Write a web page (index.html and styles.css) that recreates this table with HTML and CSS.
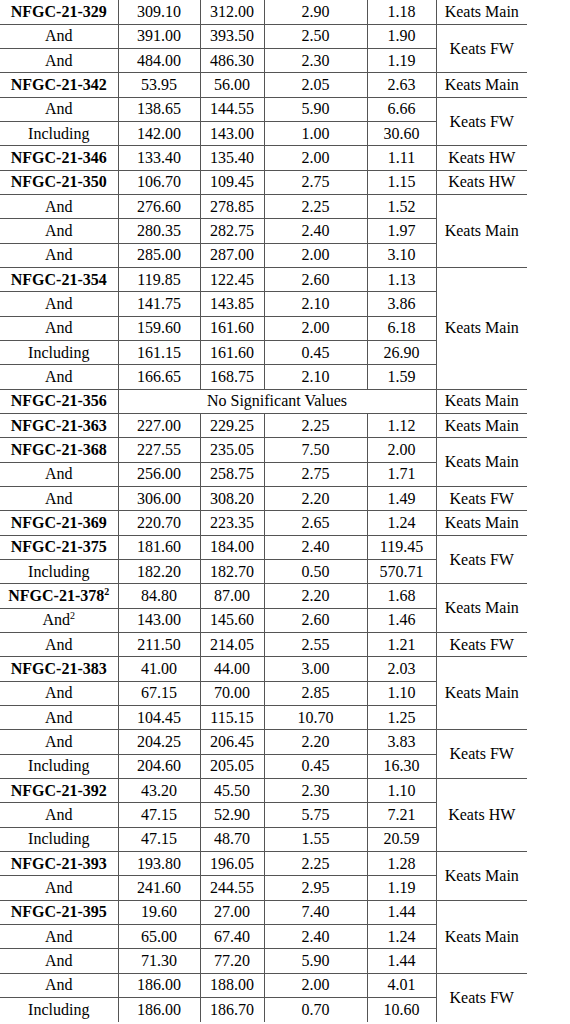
FILE: index.html
```html
<!DOCTYPE html>
<html lang="en">
<head>
<meta charset="UTF-8">
<meta name="viewport" content="width=device-width, initial-scale=1.0">
<title>Drill Results</title>
<link rel="stylesheet" href="styles.css">
</head>
<body>
<table class="assays">
    <colgroup>
        <col class="c-hole">
        <col class="c-from">
        <col class="c-to">
        <col class="c-len">
        <col class="c-au">
        <col class="c-zone">
    </colgroup>
    <tbody>
        <tr><td class="hole">NFGC-21-329</td><td>309.10</td><td>312.00</td><td>2.90</td><td>1.18</td><td class="zone">Keats Main</td></tr>
        <tr><td>And</td><td>391.00</td><td>393.50</td><td>2.50</td><td>1.90</td><td class="zone" rowspan="2">Keats FW</td></tr>
        <tr><td>And</td><td>484.00</td><td>486.30</td><td>2.30</td><td>1.19</td></tr>

        <tr><td class="hole">NFGC-21-342</td><td>53.95</td><td>56.00</td><td>2.05</td><td>2.63</td><td class="zone">Keats Main</td></tr>
        <tr><td>And</td><td>138.65</td><td>144.55</td><td>5.90</td><td>6.66</td><td class="zone" rowspan="2">Keats FW</td></tr>
        <tr><td>Including</td><td>142.00</td><td>143.00</td><td>1.00</td><td>30.60</td></tr>

        <tr><td class="hole">NFGC-21-346</td><td>133.40</td><td>135.40</td><td>2.00</td><td>1.11</td><td class="zone">Keats HW</td></tr>

        <tr><td class="hole">NFGC-21-350</td><td>106.70</td><td>109.45</td><td>2.75</td><td>1.15</td><td class="zone">Keats HW</td></tr>
        <tr><td>And</td><td>276.60</td><td>278.85</td><td>2.25</td><td>1.52</td><td class="zone" rowspan="3">Keats Main</td></tr>
        <tr><td>And</td><td>280.35</td><td>282.75</td><td>2.40</td><td>1.97</td></tr>
        <tr><td>And</td><td>285.00</td><td>287.00</td><td>2.00</td><td>3.10</td></tr>

        <tr><td class="hole">NFGC-21-354</td><td>119.85</td><td>122.45</td><td>2.60</td><td>1.13</td><td class="zone" rowspan="5">Keats Main</td></tr>
        <tr><td>And</td><td>141.75</td><td>143.85</td><td>2.10</td><td>3.86</td></tr>
        <tr><td>And</td><td>159.60</td><td>161.60</td><td>2.00</td><td>6.18</td></tr>
        <tr><td>Including</td><td>161.15</td><td>161.60</td><td>0.45</td><td>26.90</td></tr>
        <tr><td>And</td><td>166.65</td><td>168.75</td><td>2.10</td><td>1.59</td></tr>

        <tr><td class="hole">NFGC-21-356</td><td colspan="4">No Significant Values</td><td class="zone">Keats Main</td></tr>

        <tr><td class="hole">NFGC-21-363</td><td>227.00</td><td>229.25</td><td>2.25</td><td>1.12</td><td class="zone">Keats Main</td></tr>

        <tr><td class="hole">NFGC-21-368</td><td>227.55</td><td>235.05</td><td>7.50</td><td>2.00</td><td class="zone" rowspan="2">Keats Main</td></tr>
        <tr><td>And</td><td>256.00</td><td>258.75</td><td>2.75</td><td>1.71</td></tr>
        <tr><td>And</td><td>306.00</td><td>308.20</td><td>2.20</td><td>1.49</td><td class="zone">Keats FW</td></tr>

        <tr><td class="hole">NFGC-21-369</td><td>220.70</td><td>223.35</td><td>2.65</td><td>1.24</td><td class="zone">Keats Main</td></tr>

        <tr><td class="hole">NFGC-21-375</td><td>181.60</td><td>184.00</td><td>2.40</td><td>119.45</td><td class="zone" rowspan="2">Keats FW</td></tr>
        <tr><td>Including</td><td>182.20</td><td>182.70</td><td>0.50</td><td>570.71</td></tr>

        <tr><td class="hole">NFGC-21-378<sup>2</sup></td><td>84.80</td><td>87.00</td><td>2.20</td><td>1.68</td><td class="zone" rowspan="2">Keats Main</td></tr>
        <tr><td>And<sup>2</sup></td><td>143.00</td><td>145.60</td><td>2.60</td><td>1.46</td></tr>
        <tr><td>And</td><td>211.50</td><td>214.05</td><td>2.55</td><td>1.21</td><td class="zone">Keats FW</td></tr>

        <tr><td class="hole">NFGC-21-383</td><td>41.00</td><td>44.00</td><td>3.00</td><td>2.03</td><td class="zone" rowspan="3">Keats Main</td></tr>
        <tr><td>And</td><td>67.15</td><td>70.00</td><td>2.85</td><td>1.10</td></tr>
        <tr><td>And</td><td>104.45</td><td>115.15</td><td>10.70</td><td>1.25</td></tr>
        <tr><td>And</td><td>204.25</td><td>206.45</td><td>2.20</td><td>3.83</td><td class="zone" rowspan="2">Keats FW</td></tr>
        <tr><td>Including</td><td>204.60</td><td>205.05</td><td>0.45</td><td>16.30</td></tr>

        <tr><td class="hole">NFGC-21-392</td><td>43.20</td><td>45.50</td><td>2.30</td><td>1.10</td><td class="zone" rowspan="3">Keats HW</td></tr>
        <tr><td>And</td><td>47.15</td><td>52.90</td><td>5.75</td><td>7.21</td></tr>
        <tr><td>Including</td><td>47.15</td><td>48.70</td><td>1.55</td><td>20.59</td></tr>

        <tr><td class="hole">NFGC-21-393</td><td>193.80</td><td>196.05</td><td>2.25</td><td>1.28</td><td class="zone" rowspan="2">Keats Main</td></tr>
        <tr><td>And</td><td>241.60</td><td>244.55</td><td>2.95</td><td>1.19</td></tr>

        <tr><td class="hole">NFGC-21-395</td><td>19.60</td><td>27.00</td><td>7.40</td><td>1.44</td><td class="zone" rowspan="3">Keats Main</td></tr>
        <tr><td>And</td><td>65.00</td><td>67.40</td><td>2.40</td><td>1.24</td></tr>
        <tr><td>And</td><td>71.30</td><td>77.20</td><td>5.90</td><td>1.44</td></tr>
        <tr><td>And</td><td>186.00</td><td>188.00</td><td>2.00</td><td>4.01</td><td class="zone" rowspan="2">Keats FW</td></tr>
        <tr><td>Including</td><td>186.00</td><td>186.70</td><td>0.70</td><td>10.60</td></tr>
    </tbody>
</table>
</body>
</html>
```

FILE: styles.css
```css
body {
    margin: 0;
    background: #fff;
    color: #000;
    font-family: "Liberation Serif", "Times New Roman", serif;
    font-size: 16px;
}
.assays {
    width: 527px;
    table-layout: fixed;
    border-collapse: collapse;
    border: hidden;
}
.c-hole { width: 118px; }
.c-from { width: 82px; }
.c-to { width: 64px; }
.c-len { width: 103px; }
.c-au { width: 69px; }
.c-zone { width: 91px; }
.assays tr {
    height: 24.33px;
}
.assays td {
    padding: 0;
    text-align: center;
    vertical-align: middle;
    line-height: 18px;
    white-space: nowrap;
    border: 1px solid #555;
}
.assays td.zone {
    border-right: hidden;
}
.assays tr:last-child td {
    border-bottom: 1px solid #555;
}
.hole {
    font-weight: bold;
}
sup {
    font-size: 10px;
    line-height: 0;
    vertical-align: 6px;
}
```
